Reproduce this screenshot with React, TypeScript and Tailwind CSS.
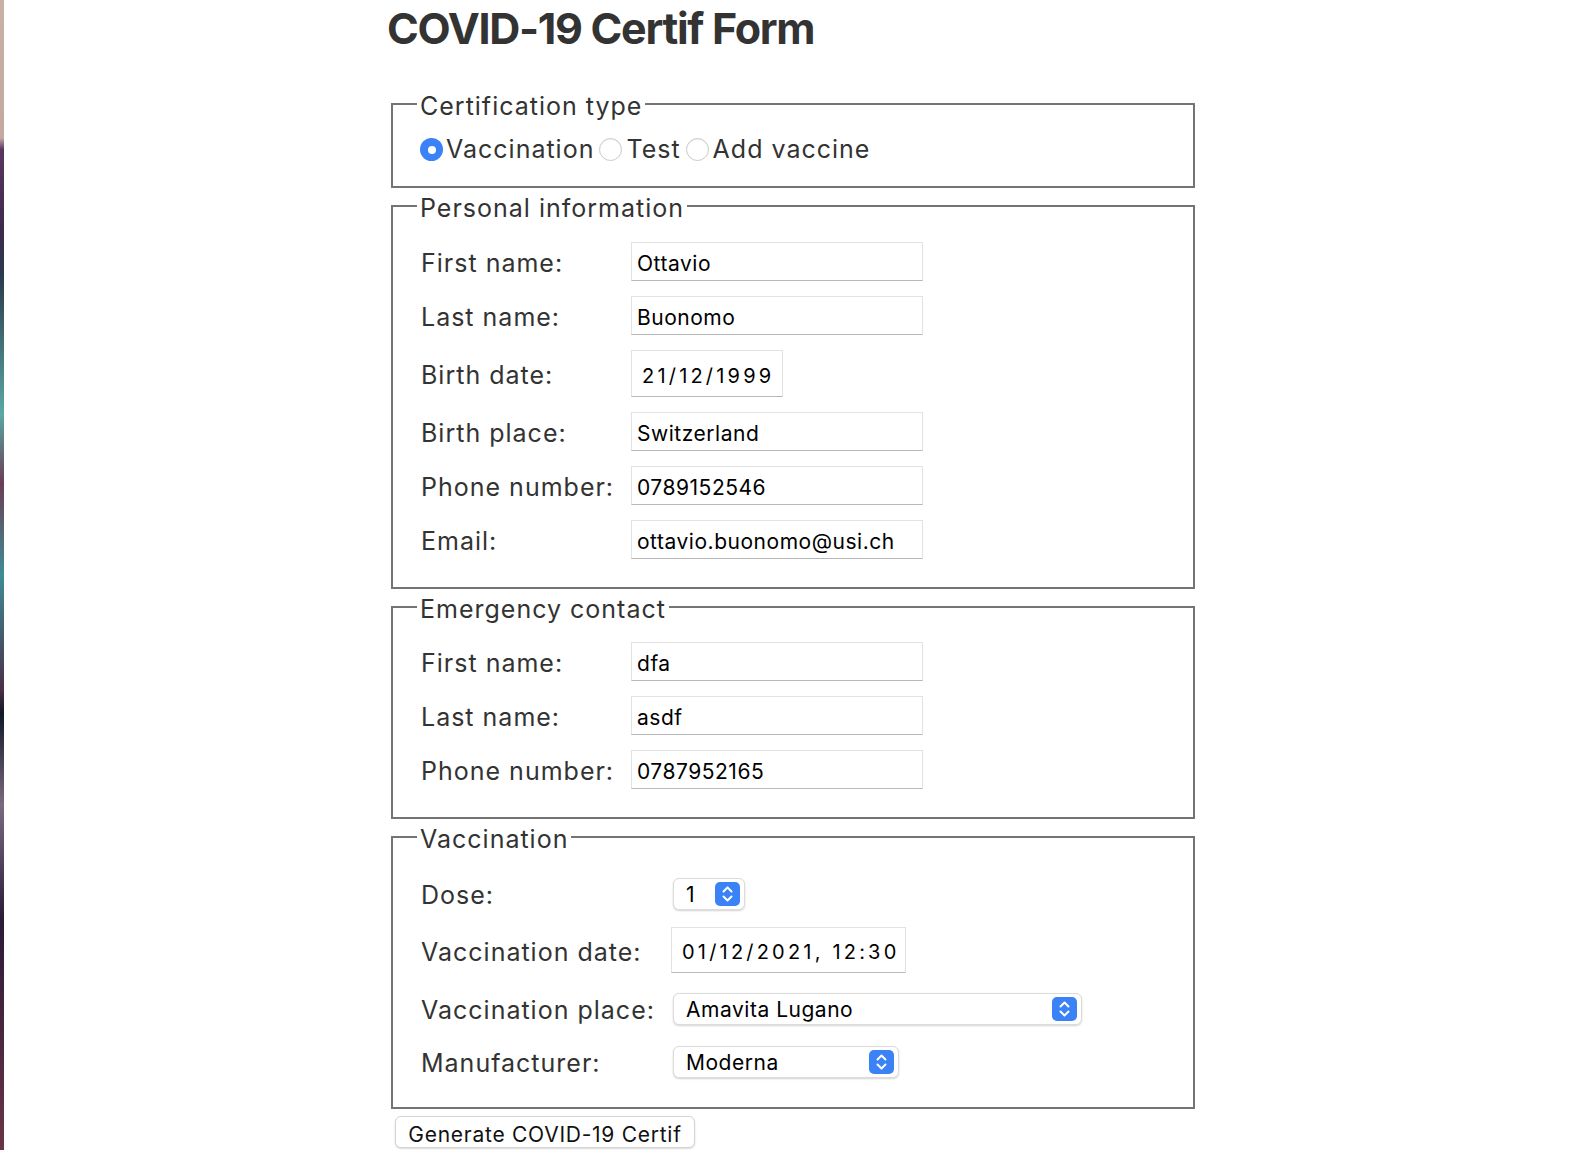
import React from 'react';

const font = { fontFamily: 'Inter, "Noto Sans", sans-serif' };

type RowProps = {
    label: string;
    labelWidth: string;
    children: React.ReactNode;
};

const Row = ({ label, labelWidth, children }: RowProps) => (
    <div className="flex items-center">
        <div className={`${labelWidth} pl-[4px] pt-[4px] text-[25px] leading-[29px] tracking-[0.04em] text-[#333]`}>
            {label}
        </div>
        {children}
    </div>
);

const TextInput = ({ value }: { value: string }) => (
    <input
        readOnly
        defaultValue={value}
        className="h-[39px] w-[292px] border border-[#e2e2e2] border-b-[#b8b8b8] bg-white px-[5px] pt-[4px] text-[21px] tracking-[0.025em] text-black outline-none"
    />
);

const DateInput = ({ value, width, height }: { value: string; width: string; height: string }) => (
    <div
        className={`${width} ${height} flex items-center border border-[#e2e2e2] border-b-[#b8b8b8] bg-white pl-[10px] pt-[4px] text-[20px] tracking-[0.16em] text-black`}
    >
        {value}
    </div>
);

const Chevrons = () => (
    <svg width="25" height="24" viewBox="0 0 25 24">
        <rect x="0" y="0" width="25" height="24" rx="5" fill="#3a82f6" />
        <path d="M8.5 9.5 L12.5 5.5 L16.5 9.5" fill="none" stroke="white" strokeWidth="2" strokeLinecap="round" strokeLinejoin="round" />
        <path d="M8.5 14.5 L12.5 18.5 L16.5 14.5" fill="none" stroke="white" strokeWidth="2" strokeLinecap="round" strokeLinejoin="round" />
    </svg>
);

const Select = ({ value, width }: { value: string; width: string }) => (
    <div
        className={`${width} ml-[2px] flex h-[32px] items-center justify-between rounded-[6px] border border-[#dcdcdc] bg-white pl-[12px] pr-[4px] text-[21px] tracking-[0.025em] text-black shadow-[0_1px_2px_rgba(0,0,0,0.18)]`}
    >
        <span className="pt-[3px]">{value}</span>
        <Chevrons />
    </div>
);

const Radio = ({ checked }: { checked?: boolean }) =>
    checked ? (
        <span className="ml-[3px] mr-[3px] flex h-[23px] w-[23px] items-center justify-center rounded-full bg-[#3a82f6]">
            <span className="h-[8px] w-[8px] rounded-full bg-white" />
        </span>
    ) : (
        <span className="ml-[5px] mr-[4px] h-[23px] w-[23px] rounded-full border border-[#c9c9c9] bg-white shadow-[inset_0_1px_1px_rgba(0,0,0,0.06)]" />
    );

const Legend = ({ children }: { children: React.ReactNode }) => (
    <legend className="px-[3px] pt-[6px] text-[25px] leading-[29px] tracking-[0.04em] text-[#333]">{children}</legend>
);

export default function App() {
    return (
        <div className="flex min-h-[1150px] bg-white" style={font}>
            <div className="w-[4px] shrink-0 bg-[linear-gradient(to_bottom,#c9b1a7_0%,#c3a9a0_12%,#5a3660_13%,#3e2a4c_20%,#2b3a4e_24%,#5aa8a4_36%,#6b3d55_42%,#3f8c94_50%,#4b2f48_60%,#111827_62%,#7a6a80_70%,#2a1a38_80%,#6b3447_100%)]" />
            <div className="ml-[383px] w-[812px]">
                <h1 className="text-[43px] font-bold leading-[56px] tracking-[-0.03em] text-[#333]">COVID-19 Certif Form</h1>

                <fieldset className="mx-[4px] mt-[30px] border-2 border-[#747474] pb-[22px] pl-[24px] pr-[24px] pt-[14px]">
                    <Legend>Certification type</Legend>
                    <div className="flex h-[29px] items-center text-[25px] leading-[29px] tracking-[0.04em] text-[#333]">
                        <Radio checked />
                        <span>Vaccination</span>
                        <Radio />
                        <span>Test</span>
                        <Radio />
                        <span>Add vaccine</span>
                    </div>
                </fieldset>

                <fieldset className="mx-[4px] border-2 border-[#747474] pb-[28px] pl-[24px] pr-[24px] pt-[19px]">
                    <Legend>Personal information</Legend>
                    <div className="flex flex-col gap-[15px]">
                        <Row label="First name:" labelWidth="w-[214px]">
                            <TextInput value="Ottavio" />
                        </Row>
                        <Row label="Last name:" labelWidth="w-[214px]">
                            <TextInput value="Buonomo" />
                        </Row>
                        <Row label="Birth date:" labelWidth="w-[214px]">
                            <DateInput value="21/12/1999" width="w-[152px]" height="h-[47px]" />
                        </Row>
                        <Row label="Birth place:" labelWidth="w-[214px]">
                            <TextInput value="Switzerland" />
                        </Row>
                        <Row label="Phone number:" labelWidth="w-[214px]">
                            <TextInput value="0789152546" />
                        </Row>
                        <Row label="Email:" labelWidth="w-[214px]">
                            <TextInput value="ottavio.buonomo@usi.ch" />
                        </Row>
                    </div>
                </fieldset>

                <fieldset className="mx-[4px] border-2 border-[#747474] pb-[28px] pl-[24px] pr-[24px] pt-[18px]">
                    <Legend>Emergency contact</Legend>
                    <div className="flex flex-col gap-[15px]">
                        <Row label="First name:" labelWidth="w-[214px]">
                            <TextInput value="dfa" />
                        </Row>
                        <Row label="Last name:" labelWidth="w-[214px]">
                            <TextInput value="asdf" />
                        </Row>
                        <Row label="Phone number:" labelWidth="w-[214px]">
                            <TextInput value="0787952165" />
                        </Row>
                    </div>
                </fieldset>

                <fieldset className="mx-[4px] border-2 border-[#747474] pb-[29px] pl-[24px] pr-[24px] pt-[23px]">
                    <Legend>Vaccination</Legend>
                    <div className="flex flex-col">
                        <Row label="Dose:" labelWidth="w-[254px]">
                            <Select value="1" width="w-[72px]" />
                        </Row>
                        <div className="mt-[17px]">
                            <Row label="Vaccination date:" labelWidth="w-[254px]">
                                <DateInput value="01/12/2021, 12:30" width="w-[235px]" height="h-[46px]" />
                            </Row>
                        </div>
                        <div className="mt-[19px]">
                            <Row label="Vaccination place:" labelWidth="w-[254px]">
                                <Select value="Amavita Lugano" width="w-[409px]" />
                            </Row>
                        </div>
                        <div className="mt-[20px]">
                            <Row label="Manufacturer:" labelWidth="w-[254px]">
                                <Select value="Moderna" width="w-[226px]" />
                            </Row>
                        </div>
                    </div>
                </fieldset>

                <button
                    type="button"
                    className="ml-[8px] mt-[7px] h-[32px] w-[300px] rounded-[6px] border border-[#d4d4d4] bg-white pt-[2px] text-[21px] tracking-[0.035em] text-[#111] shadow-[0_1px_2px_rgba(0,0,0,0.15)]"
                >
                    Generate COVID-19 Certif
                </button>
            </div>
        </div>
    );
}
